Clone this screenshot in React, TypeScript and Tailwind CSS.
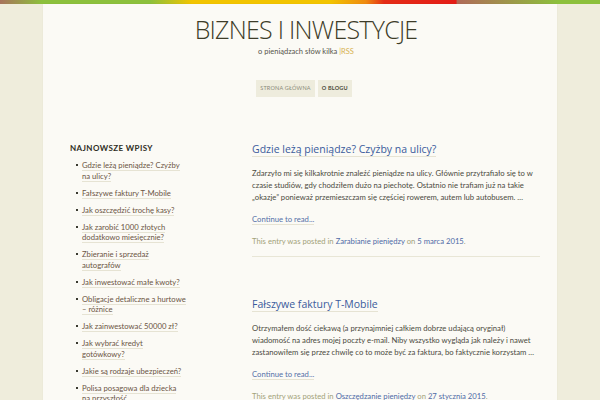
import React from "react";

const recent: string[][] = [
  ["Gdzie leżą pieniądze? Czyżby", "na ulicy?"],
  ["Fałszywe faktury T-Mobile"],
  ["Jak oszczędzić trochę kasy?"],
  ["Jak zarobić 1000 złotych", "dodatkowo miesięcznie?"],
  ["Zbieranie i sprzedaż", "autografów"],
  ["Jak inwestować małe kwoty?"],
  ["Obligacje detaliczne a hurtowe", "– różnice"],
  ["Jak zainwestować 50000 zł?"],
  ["Jak wybrać kredyt", "gotówkowy?"],
  ["Jakie są rodzaje ubezpieczeń?"],
  ["Polisa posagowa dla dziecka", "na przyszłość"],
];

type Post = { title: string; lines: string[]; cat: string; date: string };

const posts: Post[] = [
  {
    title: "Gdzie leżą pieniądze? Czyżby na ulicy?",
    lines: [
      "Zdarzyło mi się kilkakrotnie znaleźć pieniądze na ulicy. Głównie przytrafiało się to w",
      "czasie studiów, gdy chodziłem dużo na piechotę. Ostatnio nie trafiam już na takie",
      "„okazje” ponieważ przemieszczam się częściej rowerem, autem lub autobusem. …",
    ],
    cat: "Zarabianie pieniędzy",
    date: "5 marca 2015",
  },
  {
    title: "Fałszywe faktury T-Mobile",
    lines: [
      "Otrzymałem dość ciekawą (a przynajmniej całkiem dobrze udającą oryginał)",
      "wiadomość na adres mojej poczty e-mail. Niby wszystko wygląda jak należy i nawet",
      "zastanowiłem się przez chwilę co to może być za faktura, bo faktycznie korzystam …",
    ],
    cat: "Oszczędzanie pieniędzy",
    date: "27 stycznia 2015",
  },
];

export default function App() {
  return (
    <div
      className="w-[600px] h-[400px] overflow-hidden bg-[#efeddc] flex flex-col"
      style={{ fontFamily: "Lato, 'Open Sans', sans-serif" }}
    >
      <div className="h-[4px] shrink-0 bg-[linear-gradient(90deg,#a8735c_0%,#8cc03c_7%,#8cc03c_25%,#f2c400_32%,#f2c400_55%,#ef8a10_61%,#e42c16_64%,#e41c16_76%,#b06a58_76.2%,#8cc03c_93%,#8cc03c_100%)]" />
      <div className="mx-[43px] flex-1 bg-[#fbfaf5] flex flex-col shadow-[0_0_2px_rgba(0,0,0,0.04)]">
        <header className="flex flex-col items-center pt-[10px]">
          <h1
            className="pl-[12px] text-[25px] leading-[31px] text-[#3d3c28] tracking-[-0.75px]"
            style={{ fontFamily: "'Open Sans', sans-serif", fontWeight: 300 }}
          >
            BIZNES I INWESTYCJE
          </h1>
          <p className="pl-[12px] mt-[1px] text-[7.5px] leading-[12px] text-[#55544a]">
            o pieniądzach słów kilka <span className="text-[#d7b150]">|RSS</span>
          </p>
          <nav className="pl-[8px] mt-[22px] flex gap-[3px]">
            <span className="bg-[#eeecdd] px-[4px] h-[17px] flex items-center text-[5.5px] tracking-[0.2px] text-[#8a8a78]">
              STRONA GŁÓWNA
            </span>
            <span className="bg-[#eeecdd] px-[4px] h-[17px] flex items-center text-[5.5px] font-bold tracking-[0.2px] text-[#4a4a3a]">
              O BLOGU
            </span>
          </nav>
        </header>
        <div className="flex mt-[45px]">
          <aside className="ml-[27px] w-[130px] shrink-0">
            <h3 className="text-[8px] leading-[12px] font-bold tracking-[0.4px] text-[#2e2d24]">
              NAJNOWSZE WPISY
            </h3>
            <ul className="mt-[6px] pl-[12px] flex flex-col gap-[6.5px]">
              {recent.map((r) => (
                <li key={r[0]} className="relative text-[7.7px] leading-[10.5px] text-[#6b5544] whitespace-nowrap">
                  <span className="absolute left-[-6px] top-[4px] w-[2px] h-[2px] bg-[#3a3a30]" />
                  {r.map((line, j) => (
                    <div key={j}>
                      <span className="border-b border-[#e6e3d3]">{line}</span>
                    </div>
                  ))}
                </li>
              ))}
            </ul>
          </aside>
          <main className="ml-[52px] w-[288px] flex flex-col">
            {posts.map((p, i) => (
              <article key={p.title} className={i === 0 ? "" : "mt-[40px]"}>
                <h2
                  className="text-[10.5px] leading-[14px] text-[#3a5a9c]"
                  style={{ fontFamily: "'Open Sans', sans-serif" }}
                >
                  <span className="border-b border-[#e6e3d3]">{p.title}</span>
                </h2>
                <div className="mt-[11px] text-[7.7px] leading-[12px] text-[#4b4a3e] whitespace-nowrap">
                  {p.lines.map((l) => (
                    <div key={l}>{l}</div>
                  ))}
                </div>
                <p className="mt-[10px] text-[7.7px] leading-[12px] text-[#5570a8]">
                  <span className="border-b border-[#e6e3d3]">Continue to read...</span>
                </p>
                <p className="mt-[10px] text-[7.7px] leading-[12px] text-[#a3a27a]">
                  This entry was posted in <span className="text-[#4f6aa6]">{p.cat}</span> on{" "}
                  <span className="text-[#4f6aa6]">{p.date}</span>.
                </p>
                <div className="mt-[9px] h-px bg-[#e8e6d6]" />
              </article>
            ))}
          </main>
        </div>
      </div>
    </div>
  );
}
